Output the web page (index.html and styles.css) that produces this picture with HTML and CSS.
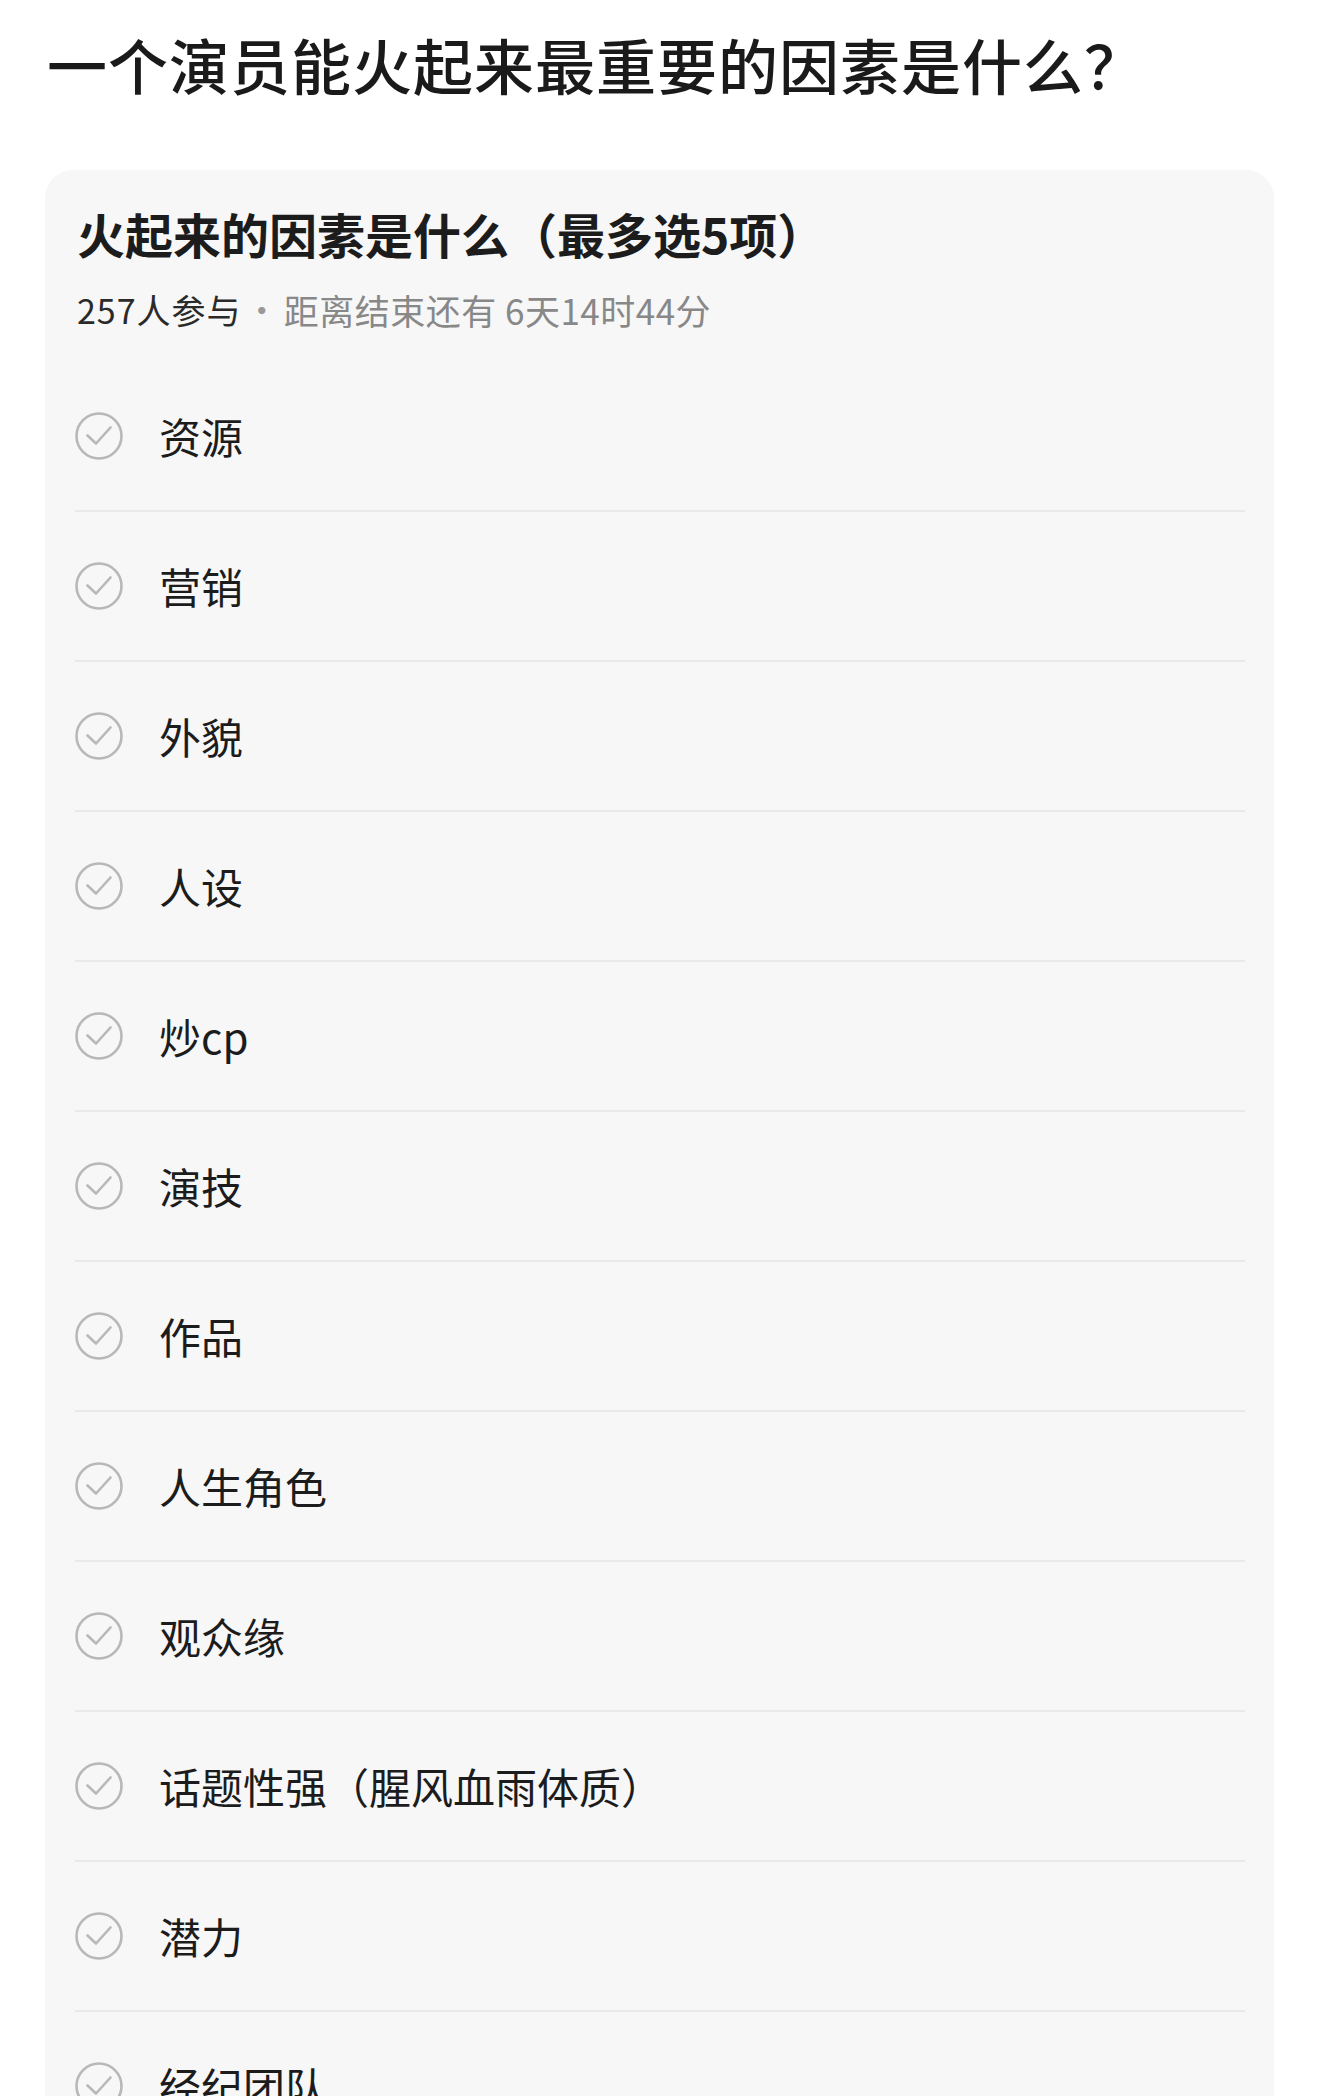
FILE: index.html
```html
<!DOCTYPE html>
<html lang="zh-CN">
<head>
<meta charset="utf-8">
<title>一个演员能火起来最重要的因素是什么？</title>
<link rel="stylesheet" href="styles.css">
</head>
<body>
<div class="page">
  <h1 class="page-title">一个演员能火起来最重要的因素是什么？</h1>
  <section class="poll">
    <h2 class="poll-title">火起来的因素是什么（最多选5项）</h2>
    <p class="poll-meta"><span class="count">257人参与</span><span class="dot">·</span><span class="remain">距离结束还有 6天14时44分</span></p>
    <ul class="options">
      <li class="option"><svg class="check" viewBox="0 0 48 48"><circle cx="24" cy="24" r="22.5"/><path d="M12.5 23.5 L21 31.5 L35.5 15.5"/></svg><span class="label">资源</span></li>
      <li class="option"><svg class="check" viewBox="0 0 48 48"><circle cx="24" cy="24" r="22.5"/><path d="M12.5 23.5 L21 31.5 L35.5 15.5"/></svg><span class="label">营销</span></li>
      <li class="option"><svg class="check" viewBox="0 0 48 48"><circle cx="24" cy="24" r="22.5"/><path d="M12.5 23.5 L21 31.5 L35.5 15.5"/></svg><span class="label">外貌</span></li>
      <li class="option"><svg class="check" viewBox="0 0 48 48"><circle cx="24" cy="24" r="22.5"/><path d="M12.5 23.5 L21 31.5 L35.5 15.5"/></svg><span class="label">人设</span></li>
      <li class="option"><svg class="check" viewBox="0 0 48 48"><circle cx="24" cy="24" r="22.5"/><path d="M12.5 23.5 L21 31.5 L35.5 15.5"/></svg><span class="label">炒cp</span></li>
      <li class="option"><svg class="check" viewBox="0 0 48 48"><circle cx="24" cy="24" r="22.5"/><path d="M12.5 23.5 L21 31.5 L35.5 15.5"/></svg><span class="label">演技</span></li>
      <li class="option"><svg class="check" viewBox="0 0 48 48"><circle cx="24" cy="24" r="22.5"/><path d="M12.5 23.5 L21 31.5 L35.5 15.5"/></svg><span class="label">作品</span></li>
      <li class="option"><svg class="check" viewBox="0 0 48 48"><circle cx="24" cy="24" r="22.5"/><path d="M12.5 23.5 L21 31.5 L35.5 15.5"/></svg><span class="label">人生角色</span></li>
      <li class="option"><svg class="check" viewBox="0 0 48 48"><circle cx="24" cy="24" r="22.5"/><path d="M12.5 23.5 L21 31.5 L35.5 15.5"/></svg><span class="label">观众缘</span></li>
      <li class="option"><svg class="check" viewBox="0 0 48 48"><circle cx="24" cy="24" r="22.5"/><path d="M12.5 23.5 L21 31.5 L35.5 15.5"/></svg><span class="label">话题性强（腥风血雨体质）</span></li>
      <li class="option"><svg class="check" viewBox="0 0 48 48"><circle cx="24" cy="24" r="22.5"/><path d="M12.5 23.5 L21 31.5 L35.5 15.5"/></svg><span class="label">潜力</span></li>
      <li class="option"><svg class="check" viewBox="0 0 48 48"><circle cx="24" cy="24" r="22.5"/><path d="M12.5 23.5 L21 31.5 L35.5 15.5"/></svg><span class="label">经纪团队</span></li>
    </ul>
  </section>
</div>
</body>
</html>
```

FILE: styles.css
```css
html, body {
  margin: 0;
  padding: 0;
  background: #ffffff;
}

body {
  font-family: "Noto Sans CJK SC", "Noto Sans", sans-serif;
  color: #1c1c1c;
}

.page {
  padding: 24px 46px 0 45px;
}

.page-title {
  margin: 0 0 66px 2px;
  font-size: 60px;
  line-height: 80px;
  font-weight: 500;
  color: #1a1a1a;
  letter-spacing: 1px;
}

.poll {
  background: #f7f7f7;
  border-radius: 28px;
  padding: 33px 29px 0 30px;
}

.poll-title {
  margin: 0 0 0 2px;
  font-size: 48px;
  line-height: 60px;
  font-weight: 700;
  color: #1c1c1c;
}

.poll-meta {
  margin: 23px 0 0 2px;
  font-size: 34px;
  line-height: 48px;
  color: #888888;
  display: flex;
  align-items: center;
}

.poll-meta .count {
  color: #2a2a2a;
  letter-spacing: 1px;
}

.poll-meta .dot {
  padding: 0 5px 0 3px;
  color: #999999;
}

.poll-meta .remain {
  font-size: 35px;
  letter-spacing: 0.5px;
}

.options {
  list-style: none;
  margin: 28px 0 0 0;
  padding: 0;
}

.option {
  display: flex;
  align-items: center;
  height: 148px;
  border-bottom: 2px solid #e9e9e9;
}

.check {
  width: 48px;
  height: 48px;
  flex: 0 0 48px;
  margin-right: 36px;
  fill: none;
  stroke: #b8b8b8;
  stroke-width: 2.6;
  stroke-linecap: round;
  stroke-linejoin: round;
}

.label {
  font-size: 42px;
  line-height: 56px;
  color: #1c1c1c;
}
```
